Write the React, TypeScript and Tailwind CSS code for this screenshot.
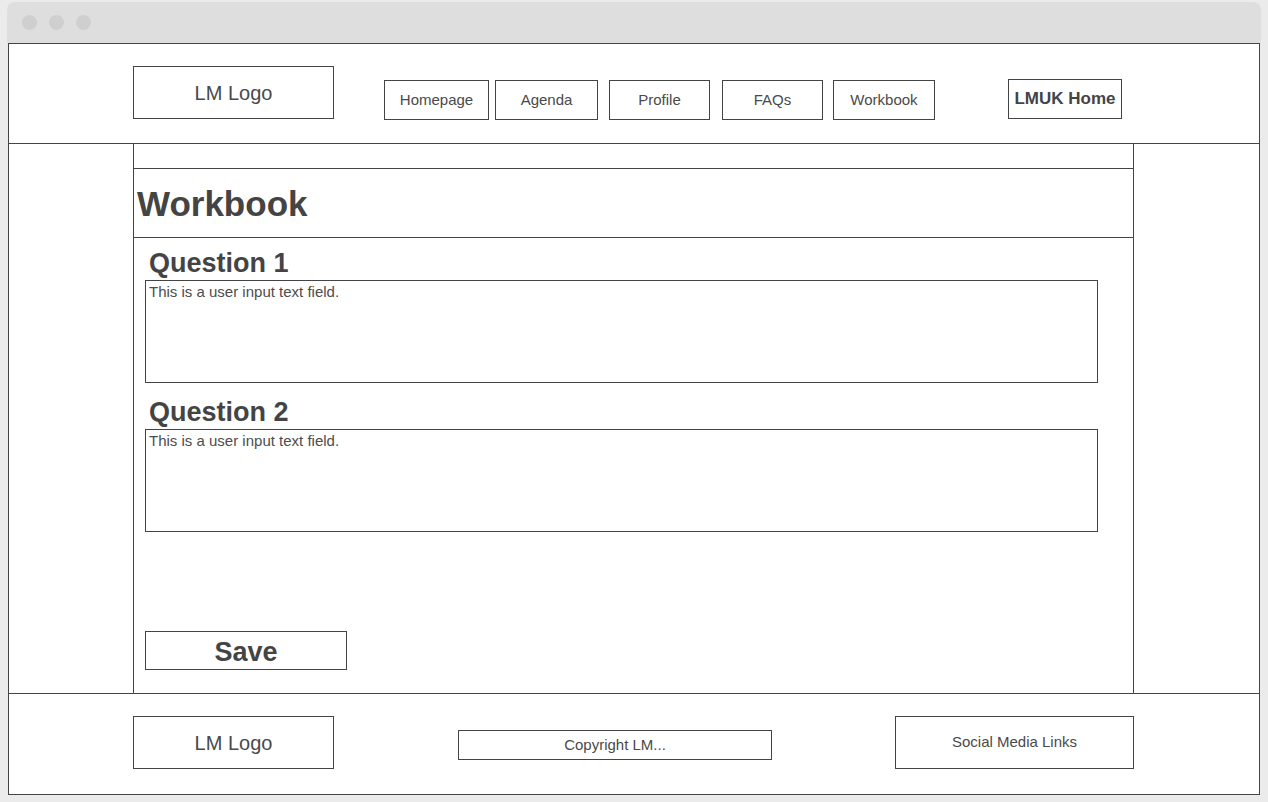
const font = "[font-family:'Liberation_Sans',Arial,sans-serif]";

/**
 * ナビゲーションボタン
 */
const NavBox = ({ label, className }: { label: string; className: string }) => {
  return (
    <div
      className={`h-[40px] border border-[#444] flex items-center justify-center text-[15px] text-[#4a4a4a] ${className}`}
    >
      {label}
    </div>
  );
};

/**
 * 質問ブロック
 */
const QuestionBlock = ({ title, className }: { title: string; className: string }) => {
  return (
    <div className={className}>
      <h2 className="pl-[15px] pt-px text-[27px] leading-[31px] font-bold text-[#444]">{title}</h2>
      <div className="mt-px ml-[11px] w-[953px] h-[103px] border border-[#444] pt-[2px] px-[3px] text-[15px] leading-[17px] text-[#4d4d4d]">
        This is a user input text field.
      </div>
    </div>
  );
};

export default function App() {
  return (
    <div className={`w-full h-[802px] bg-[#ebebeb] pt-[2px] ${font}`}>
      <div className="ml-[7px] w-[1254px]">
        {/* ブラウザのタイトルバー */}
        <div className="h-[41px] bg-[#dedede] rounded-t-[8px] flex items-center gap-[12px] pl-[15px]">
          <span className="w-[15px] h-[15px] rounded-full bg-[#cfcfcf]" />
          <span className="w-[15px] h-[15px] rounded-full bg-[#cfcfcf]" />
          <span className="w-[15px] h-[15px] rounded-full bg-[#cfcfcf]" />
        </div>

        <div className="mx-px h-[752px] border border-[#444] bg-white flex flex-col">
          {/* ヘッダー */}
          <div className="h-[100px] shrink-0 border-b border-[#444] flex items-start pl-[124px]">
            <div className="mt-[22px] w-[201px] h-[53px] border border-[#444] flex items-center justify-center text-[20px] text-[#4a4a4a]">
              LM Logo
            </div>
            <NavBox label="Homepage" className="ml-[50px] mt-[36px] w-[105px]" />
            <NavBox label="Agenda" className="ml-[6px] mt-[36px] w-[103px]" />
            <NavBox label="Profile" className="ml-[11px] mt-[36px] w-[101px]" />
            <NavBox label="FAQs" className="ml-[12px] mt-[36px] w-[101px]" />
            <NavBox label="Workbook" className="ml-[10px] mt-[36px] w-[102px]" />
            <div className="ml-[73px] mt-[35px] w-[114px] h-[40px] border border-[#444] flex items-center justify-center text-[17px] font-bold text-[#444]">
              LMUK Home
            </div>
          </div>

          {/* メイン */}
          <div className="flex-1 flex">
            <div className="ml-[124px] w-[1001px] border-x border-[#444] flex flex-col">
              <div className="h-[25px] shrink-0 border-b border-[#444]" />
              <div className="h-[69px] shrink-0 border-b border-[#444] flex items-center pl-[3px] pt-[2px]">
                <h1 className="text-[35px] font-bold text-[#444]">Workbook</h1>
              </div>
              <div className="flex-1 flex flex-col pt-[9px] pb-[23px]">
                <QuestionBlock title="Question 1" className="" />
                <QuestionBlock title="Question 2" className="mt-[13px]" />
                <div className="mt-auto ml-[11px] w-[202px] h-[39px] border border-[#444] flex items-center justify-center pt-[3px] text-[27px] font-bold text-[#444]">
                  Save
                </div>
              </div>
            </div>
          </div>

          {/* フッター */}
          <div className="h-[101px] shrink-0 border-t border-[#444] flex items-start pl-[124px]">
            <div className="mt-[22px] w-[201px] h-[53px] border border-[#444] flex items-center justify-center text-[20px] text-[#4a4a4a]">
              LM Logo
            </div>
            <div className="ml-[124px] mt-[36px] w-[314px] h-[30px] border border-[#444] flex items-center justify-center pt-px text-[15px] text-[#4a4a4a]">
              Copyright LM...
            </div>
            <div className="ml-[123px] mt-[22px] w-[239px] h-[53px] border border-[#444] flex items-center justify-center text-[15px] text-[#4a4a4a]">
              Social Media Links
            </div>
          </div>
        </div>
      </div>
    </div>
  );
}
